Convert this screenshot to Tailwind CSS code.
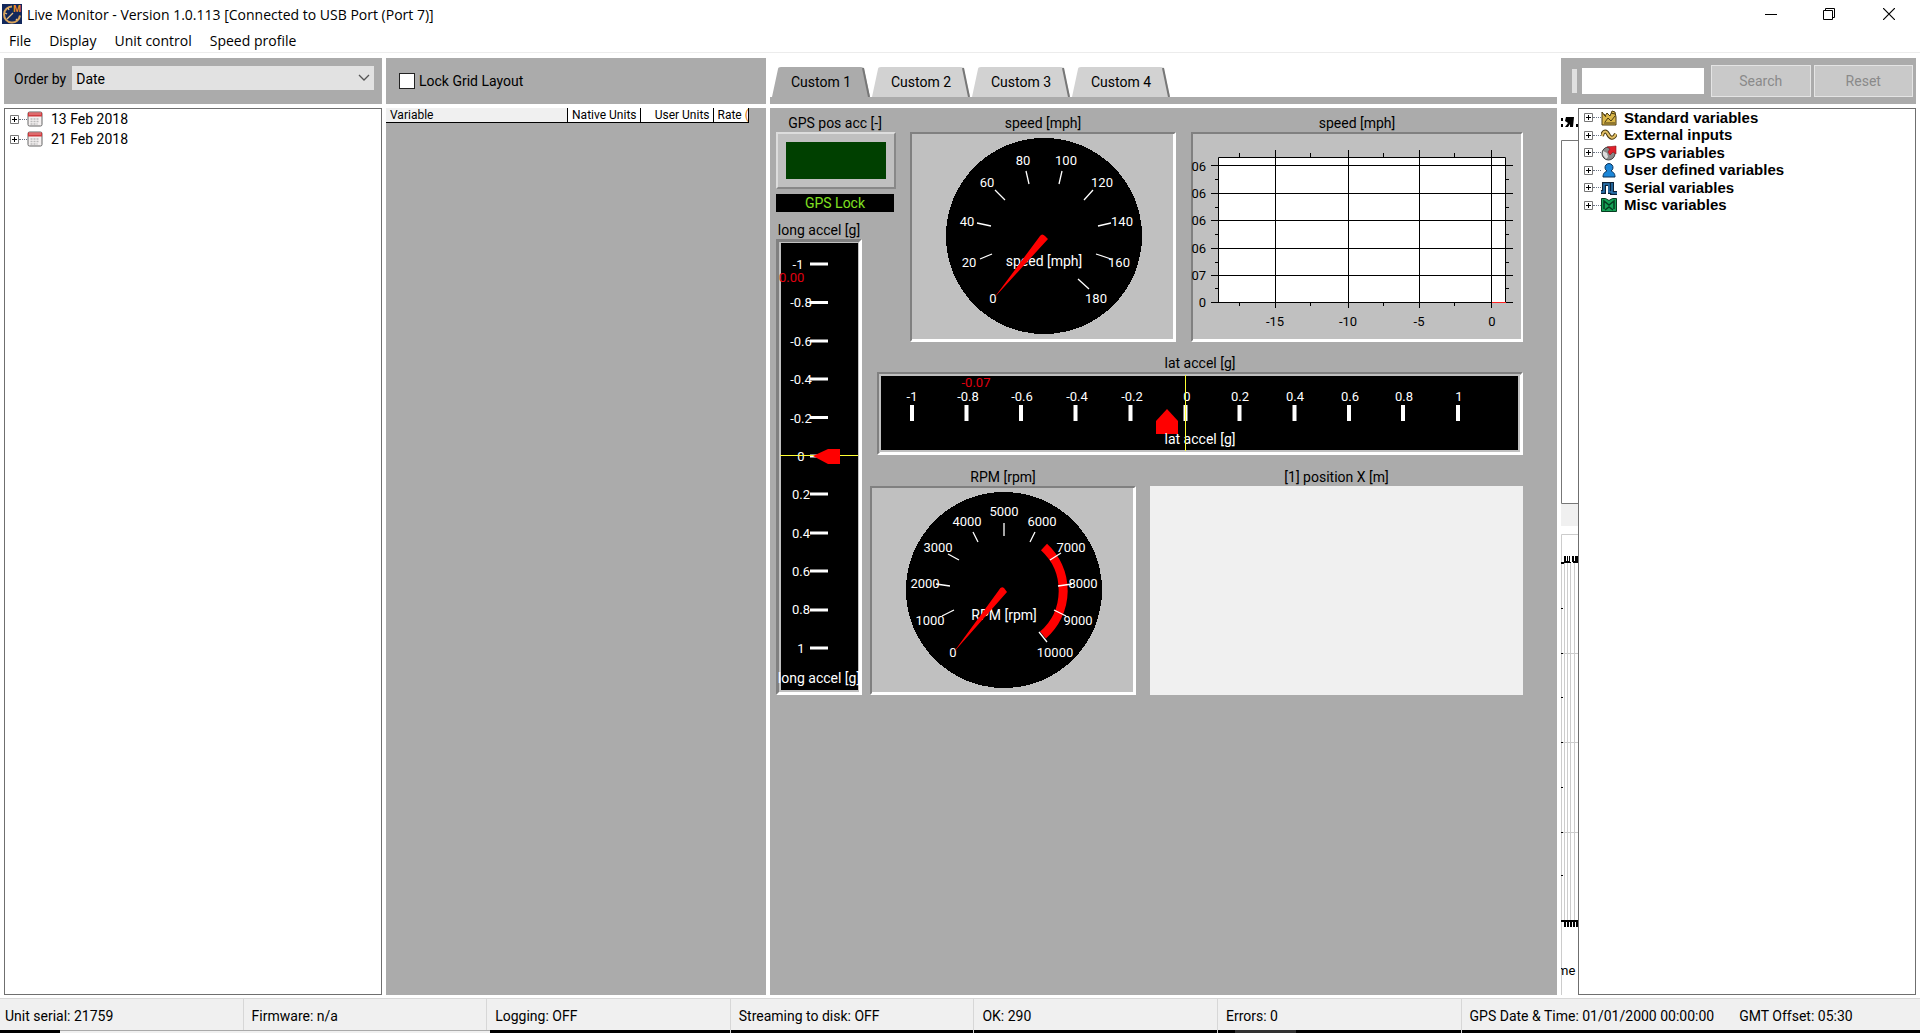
<!DOCTYPE html>
<html lang="en">
<head>
<meta charset="utf-8">
<meta name="viewport" content="width=device-width, initial-scale=1">
<title>Live Monitor</title>
<script src="https://cdn.jsdelivr.net/npm/@tailwindcss/browser@4"></script>
</head>
<body class="flex min-h-screen flex-col bg-white font-[Roboto,Arial,sans-serif] text-[14px] leading-4 text-black">

<!-- Shared symbols -->
<svg class="hidden">
  <symbol id="plus" viewBox="0 0 9 9"><path d="M.5.5h8v8h-8z" fill="#fff" stroke="#777"/><path d="M2 4.500h5M4.500 2v5" stroke="#000"/></symbol>
  <symbol id="calendar" viewBox="0 0 16 16"><rect x="1" y="1" width="14" height="14" rx="1.500" fill="#f4f0f0" stroke="#666"/><path d="M1 1.500h14v4H1z" fill="#cf3b3f"/><path d="M2 3h12" stroke="#ee9a9a"/><path d="M3.500 8h9M3.500 10.500h9M3.500 13h7" stroke="#b9b9b9" stroke-width="1.500" stroke-dasharray="2 1"/></symbol>
</svg>

<header>
  <div class="flex h-7 items-center justify-between">
    <div class="flex items-center gap-[5px] pl-0.5">
      <svg class="size-5" viewBox="0 0 20 20"><path fill="#12285c" d="M0 0h20v20H0z"/><path d="M10 2.500a8 8 0 1 0 8 9" fill="none" stroke="#d9a45b" stroke-width="2"/><path d="m5 15 6-6M3 9l2 1M6 4l1 2M14 15l1 1" stroke="#e8c084" stroke-width="1.300"/><text x="11" y="8" font-size="9" font-weight="bold" fill="#f08a24">M</text></svg>
      <h1 class="pt-px font-['Open_Sans',sans-serif]">Live Monitor - Version 1.0.113 [Connected to USB Port (Port 7)]</h1>
    </div>
    <div class="flex">
      <button aria-label="Minimize" class="flex h-7 w-[58px] items-center justify-center"><svg class="size-3" viewBox="0 0 12 12"><path d="M0 6.500h12" stroke="#000"/></svg></button>
      <button aria-label="Restore" class="flex h-7 w-[58px] items-center justify-center"><svg class="size-3" viewBox="0 0 12 12" fill="none" stroke="#000"><path d="M.5 2.500h9v9h-9zM2.500 2.500v-2h9v9h-2"/></svg></button>
      <button aria-label="Close" class="flex h-7 w-[62px] items-center justify-center"><svg class="size-3" viewBox="0 0 12 12"><path d="m0 0 12 12M12 0 0 12" stroke="#000" stroke-width="1.200"/></svg></button>
    </div>
  </div>
  <nav class="flex h-[25px] items-center gap-[18px] border-b border-[#ececec] pt-0.5 pl-[9px] font-['Open_Sans',sans-serif]">
    <button>File</button><button>Display</button><button>Unit control</button><button>Speed profile</button>
  </nav>
</header>

<main class="flex flex-1 gap-1 px-1 pt-[5px] pb-[3px]">

  <!-- Log files -->
  <section class="flex w-[378px] shrink-0 flex-col gap-1">
    <div class="flex h-[46px] items-start gap-1.5 bg-[#ababab] pt-2 pr-2 pl-2.5">
      <label for="order" class="py-[5px]">Order by</label>
      <div class="relative flex-1">
        <select id="order" class="h-6 w-full appearance-none bg-[#e2e2e2] pt-0.5 pl-1"><option>Date</option></select>
        <svg class="pointer-events-none absolute top-2 right-1 h-2 w-3" viewBox="0 0 12 8"><path d="m1 1 5 5 5-5" fill="none" stroke="#555" stroke-width="1.300"/></svg>
      </div>
    </div>
    <ul class="flex-1 border border-[#6f6f6f] pl-[5px]">
      <li class="flex h-5 items-center"><svg class="size-[9px]"><use href="#plus"/></svg><i class="w-2 border-t border-dotted border-gray-500"></i><svg class="size-4"><use href="#calendar"/></svg><span class="pl-2">13 Feb 2018</span></li>
      <li class="flex h-5 items-center"><svg class="size-[9px]"><use href="#plus"/></svg><i class="w-2 border-t border-dotted border-gray-500"></i><svg class="size-4"><use href="#calendar"/></svg><span class="pl-2">21 Feb 2018</span></li>
    </ul>
  </section>

  <!-- Variable list -->
  <section class="flex w-[380px] shrink-0 flex-col gap-1">
    <div class="flex h-[46px] items-center bg-[#ababab] pl-[13px]">
      <label class="flex items-center gap-1"><input type="checkbox" class="size-4 appearance-none border border-[#222] bg-white">Lock Grid Layout</label>
    </div>
    <div class="flex-1 bg-[#ababab]">
      <table class="w-[363px] table-fixed border-collapse text-[12px] leading-[14px]">
        <thead><tr class="border-b border-black bg-white">
          <th class="w-[181px] border-r border-black bg-[#f0f0f0] pl-1 text-left font-normal">Variable</th>
          <th class="w-[73px] border-r border-black pr-[3px] text-right font-normal">Native Units</th>
          <th class="w-[73px] border-r border-black pr-[3px] text-right font-normal">User Units</th>
          <th class="overflow-hidden border-r border-black pl-1 text-left font-normal whitespace-nowrap">Rate <span class="text-amber-600">(</span></th>
        </tr></thead>
      </table>
    </div>
  </section>

  <!-- Dashboard -->
  <section class="flex min-w-0 flex-1 flex-col gap-1">
    <div class="flex h-[46px] flex-col justify-end">
      <div class="flex gap-0.5 pl-0.5">
        <button class="relative h-[30px] w-[98px]"><svg class="absolute inset-0 size-full" viewBox="0 0 98 30"><path d="M0 30 6 2q0-2 3-2h80q2 0 3 2l6 28z" fill="#ababab"/><path d="m91 1 6 29" stroke="#777" stroke-width="2"/></svg><span class="relative">Custom 1</span></button>
        <button class="relative h-[30px] w-[98px]"><svg class="absolute inset-0 size-full" viewBox="0 0 98 30"><path d="M0 30 6 2q0-2 3-2h80q2 0 3 2l6 28z" fill="#d2d2d2"/><path d="m91 1 6 29" stroke="#777" stroke-width="2"/></svg><span class="relative">Custom 2</span></button>
        <button class="relative h-[30px] w-[98px]"><svg class="absolute inset-0 size-full" viewBox="0 0 98 30"><path d="M0 30 6 2q0-2 3-2h80q2 0 3 2l6 28z" fill="#d2d2d2"/><path d="m91 1 6 29" stroke="#777" stroke-width="2"/></svg><span class="relative">Custom 3</span></button>
        <button class="relative h-[30px] w-[98px]"><svg class="absolute inset-0 size-full" viewBox="0 0 98 30"><path d="M0 30 6 2q0-2 3-2h80q2 0 3 2l6 28z" fill="#d2d2d2"/><path d="m91 1 6 29" stroke="#777" stroke-width="2"/></svg><span class="relative">Custom 4</span></button>
      </div>
      <div class="h-[7px] bg-[#ababab]"></div>
    </div>

    <div class="flex flex-1 gap-2 bg-[#ababab] pt-1 pl-1.5">
      <div class="w-[86px] shrink-0">
        <h2 class="h-5 w-[118px] pt-[3px] text-center">GPS pos acc [-]</h2>
        <div class="h-[57px] w-[120px] border-2 border-t-[#ddd] border-r-[#888] border-b-[#888] border-l-[#ddd] bg-[#c0c0c0] p-2"><div class="h-full bg-[#004000]"></div></div>
        <div class="mt-[5px] h-[18px] w-[118px] bg-black pt-px text-center text-[#80e020]">GPS Lock</div>
        <h2 class="h-[27px] pt-[10px] text-center whitespace-nowrap">long accel [g]</h2>
        <svg class="block h-[456px] w-[86px] text-[13px]" viewBox="0 0 86 456" fill="#fff">
          <path d="M0 0h86v456H0z" fill="#fff"/><path d="M0 0h86l-3 3H3v450l-3 3z" fill="#808080"/><path d="M3 3h80v450H3z" fill="#c0c0c0"/><path d="M5 4h77v447H5z" fill="#000"/>
          <path d="M34 25h18M34 63.500h18M34 102h18M34 140h18M34 178.500h18M34 217h18M34 255h18M34 294h18M34 332h18M34 371h18M34 409h18" stroke="#fff" stroke-width="3"/>
          <g text-anchor="middle"><text x="22" y="30">-1</text><text x="25" y="68">-0.8</text><text x="25" y="107">-0.6</text><text x="25" y="145">-0.4</text><text x="25" y="184">-0.2</text><text x="25" y="222">0</text><text x="25" y="260">0.2</text><text x="25" y="299">0.4</text><text x="25" y="337">0.6</text><text x="25" y="375">0.8</text><text x="25" y="414">1</text><text x="43" y="444" class="text-[14px]">long accel [g]</text></g>
          <text x="3" y="43" fill="#e00010">0.00</text>
          <path d="M4 216.500h78" stroke="#ff3"/><path d="m37 217 15-7h12v15H52z" fill="#f00"/>
        </svg>
      </div>

      <div>
        <div class="flex gap-[15px] pl-10">
          <div>
            <h2 class="h-5 pt-[3px] text-center">speed [mph]</h2>
            <svg class="block h-[210px] w-[266px] text-[13px]" viewBox="910 132 266 210" fill="#fff">
              <path d="M910 132h266v210H910z"/><path d="M910 132h266l-2 2H912v206l-2 2z" fill="#808080"/><path d="M912 134h261v205H912z" fill="#c0c0c0"/>
              <circle cx="1044" cy="236" r="98" fill="#000" shape-rendering="crispEdges"/>
              <g text-anchor="middle"><text x="1044" y="266" class="text-[14px]">speed [mph]</text><text x="1023" y="165">80</text><text x="1066" y="165">100</text><text x="987" y="187">60</text><text x="1102" y="187">120</text><text x="967" y="226">40</text><text x="1122" y="226">140</text><text x="969" y="267">20</text><text x="1119" y="267">160</text><text x="993" y="303">0</text><text x="1096" y="303">180</text></g>
              <path d="m1026 171 3 13M1062 171l-3 13M995 190l10 10M1093 190l-9 10M977 223l14 3M1111 223l-13 3M980 259l12-5M1111 259l-15-5M1078 279l11 10" stroke="#fff" stroke-width="1.300"/>
              <path d="m994 298 46-62q2-3 5 0l3 3z" fill="#f00"/>
            </svg>
          </div>
          <div>
            <h2 class="h-5 pt-[3px] text-center">speed [mph]</h2>
            <svg class="block h-[210px] w-[332px] text-[13px]" viewBox="1191 132 332 210">
              <path d="M1191 132h332v210h-332z" fill="#fff"/><path d="M1191 132h332l-2 2h-328v206l-2 2z" fill="#808080"/><path d="M1193 134h328v205h-328z" fill="#c0c0c0"/>
              <path d="M1218.500 157.500h287v145h-287z" fill="#fff" stroke="#000"/>
              <path d="M1275.500 150v158M1348.500 150v158M1419.500 150v158M1491.500 150v158M1211 165.500h302M1211 193.500h302M1211 220.500h302M1211 248.500h302M1211 275.500h302M1211 302.500h302M1239.500 153v4M1310.500 153v4M1383.500 153v4M1454.500 153v4M1239.500 302v4M1310.500 302v4M1383.500 302v4M1454.500 302v4M1215 179.500h3M1215 207.500h3M1215 234.500h3M1215 262.500h3M1215 288.500h3M1506 179.500h3M1506 207.500h3M1506 234.500h3M1506 262.500h3M1506 288.500h3" stroke="#000"/>
              <path d="M1492 302.500h14" stroke="#f22"/>
              <g text-anchor="end"><text x="1206" y="171">06</text><text x="1206" y="198">06</text><text x="1206" y="225">06</text><text x="1206" y="253">06</text><text x="1206" y="280">07</text><text x="1206" y="307">0</text></g>
              <g text-anchor="middle"><text x="1275" y="326">-15</text><text x="1348" y="326">-10</text><text x="1419" y="326">-5</text><text x="1492" y="326">0</text></g>
            </svg>
          </div>
        </div>

        <div class="pt-2.5 pl-[7px]">
          <h2 class="h-5 pt-[3px] text-center">lat accel [g]</h2>
          <svg class="block h-[83px] w-[646px] text-[13px]" viewBox="877 372 646 83" fill="#fff">
            <path d="M877 372h646v83H877z"/><path d="M877 372h646l-3 3H880v77l-3 3z" fill="#808080"/><path d="M879 374h641v78H879z" fill="#c0c0c0"/><path d="M881 376h637v74H881z" fill="#000"/>
            <path d="M912 405v16M966.500 405v16M1021 405v16M1075.500 405v16M1130.500 405v16M1185.500 405v16M1239.500 405v16M1294.500 405v16M1349 405v16M1403 405v16M1458 405v16" stroke="#fff" stroke-width="4"/>
            <g text-anchor="middle"><text x="912" y="401">-1</text><text x="968" y="401">-0.8</text><text x="1022" y="401">-0.6</text><text x="1077" y="401">-0.4</text><text x="1132" y="401">-0.2</text><text x="1187" y="401">0</text><text x="1240" y="401">0.2</text><text x="1295" y="401">0.4</text><text x="1350" y="401">0.6</text><text x="1404" y="401">0.8</text><text x="1459" y="401">1</text><text x="976" y="387" fill="#e00010">-0.07</text></g>
            <path d="m1167 409 11 12v13h-22v-13z" fill="#f00"/>
            <text x="1200" y="444" text-anchor="middle" class="text-[14px]">lat accel [g]</text>
            <path d="M1185.500 375v76" stroke="#ff3"/>
          </svg>
        </div>

        <div class="flex gap-[14px] pt-[11px]">
          <div>
            <h2 class="h-5 pt-[3px] text-center">RPM [rpm]</h2>
            <svg class="block h-[209px] w-[266px] text-[13px]" viewBox="870 486 266 209" fill="#fff">
              <path d="M870 486h266v209H870z"/><path d="M870 486h266l-2 2H872v205l-2 2z" fill="#808080"/><path d="M872 488h261v204H872z" fill="#c0c0c0"/>
              <circle cx="1004" cy="590" r="98" fill="#000" shape-rendering="crispEdges"/>
              <path d="M1044 547a59 59 0 0 1-1 88" fill="none" stroke="#f00" stroke-width="9"/>
              <g text-anchor="middle"><text x="1004" y="620" class="text-[14px]">RPM [rpm]</text><text x="1004" y="516">5000</text><text x="967" y="526">4000</text><text x="1042" y="526">6000</text><text x="938" y="552">3000</text><text x="1071" y="552">7000</text><text x="925" y="588">2000</text><text x="1083" y="588">8000</text><text x="930" y="625">1000</text><text x="1078" y="625">9000</text><text x="953" y="657">0</text><text x="1055" y="657">10000</text></g>
              <path d="M1004 523v13M973 532l5 10M1035 532l-5 10M948 554l11 6M1061 553l-11 7M936 584l14 2M1072 584l-14 2M942 616l12-6M1066 616l-12-6M1039 632l8 10" stroke="#fff" stroke-width="1.300"/>
              <path d="m953 653 46-63q2-4 5-2l3 4z" fill="#f00"/>
            </svg>
          </div>
          <div class="flex flex-1 flex-col">
            <h2 class="h-5 pt-[3px] text-center">[1] position X [m]</h2>
            <div class="flex-1 bg-[#f0f0f0]"></div>
          </div>
        </div>
      </div>
    </div>
  </section>

  <!-- Variable tree -->
  <section class="flex w-[355px] shrink-0 flex-col gap-1">
    <form class="flex h-[46px] items-center bg-[#ababab] pr-[3px] pl-[11px]">
      <i class="h-6 w-[5px] bg-[#e0e0e0]"></i>
      <input aria-label="Search variables" class="ml-[5px] h-[26px] w-[122px] bg-white px-1">
      <button type="button" disabled class="ml-[7px] h-8 flex-1 border border-[#e4e4e4] bg-[#c9c9c9] text-[#8a8a8a]">Search</button>
      <button type="button" disabled class="ml-[3px] h-8 flex-1 border border-[#e4e4e4] bg-[#c9c9c9] text-[#8a8a8a]">Reset</button>
    </form>
    <div class="flex flex-1">
      <svg class="h-[887px] w-[17px] text-[13px]" viewBox="0 0 17 887" fill="none">
        <path d="M0 10h2v3H0zm0 6h2v3H0zM5 9h8l-1 10h-3v-3l-2 3H4l3-4-3-2zM15 16h2v3h-2z" fill="#000"/>
        <path d="M17 32.500H.5v363H17" stroke="#777"/><path d="M0 396h17v22H0z" fill="#f0f0f0"/>
        <path d="M17 426.500H.5V887M3.500 454v362M6.500 454v362M9.500 454v362M13.500 454v362M0 545.500h17M0 634.500h17M0 724.500h17" stroke="#ccc"/>
        <path d="M0 500.500h2M0 545.500h2M0 589.500h2M0 634.500h2M0 679.500h2M0 724.500h2M0 767.500h2" stroke="#000"/>
        <path d="M0 454h3v-6h2v5h1v-5h1v5h1v-5h1v6h2v-6h2v5h1v-5h3v7h-5v-1h-2v1H3v1H0zM0 812h17v7h-2v-5h-1v5h-2v-5h-1v5H9v-5H8v5H6v-5H5v5H3v-5H0z" fill="#000"/>
        <text x="-4" y="867" fill="#000">me</text>
      </svg>
      <div class="flex-1 border border-[#6f6f6f] pl-[5px]">
        <ul class="grid h-[105px] grid-rows-6 font-['Liberation_Sans',Arial,sans-serif] text-[15px] font-bold">
          <li class="flex items-center"><svg class="size-[9px]"><use href="#plus"/></svg><i class="w-2 border-t border-dotted border-gray-500"></i><svg class="size-4" viewBox="0 0 16 16"><path d="M1 2v13h14V7l-1-5-3-1-2 5-3-3-2 3z" fill="#d9b64a" stroke="#4a3a10"/><path d="m4 12 3-4 3 3 4-5M3 4l2 3M10 3l4 1M3 13h11" stroke="#4a3a10" fill="none"/></svg><span class="pl-[7px]">Standard variables</span></li>
          <li class="flex items-center"><svg class="size-[9px]"><use href="#plus"/></svg><i class="w-2 border-t border-dotted border-gray-500"></i><svg class="size-4" viewBox="0 0 16 16" fill="none"><path d="M1 9c1-5 4-6 6-2s5 6 8 0" stroke="#4a3a10" stroke-width="4"/><path d="M1 9c1-5 4-6 6-2s5 6 8 0" stroke="#e3c067" stroke-width="2"/></svg><span class="pl-[7px]">External inputs</span></li>
          <li class="flex items-center"><svg class="size-[9px]"><use href="#plus"/></svg><i class="w-2 border-t border-dotted border-gray-500"></i><svg class="size-4" viewBox="0 0 16 16"><circle cx="7.500" cy="8.500" r="6.500" fill="#888" stroke="#444"/><path d="m2 6 4 2 1 4-2 2-3-4z" fill="#ddd"/><path d="m6 2 9-1v8l-3-2-3 3-2-3 2-3z" fill="#e0202a" stroke="#80141a" stroke-width=".6"/></svg><span class="pl-[7px]">GPS variables</span></li>
          <li class="flex items-center"><svg class="size-[9px]"><use href="#plus"/></svg><i class="w-2 border-t border-dotted border-gray-500"></i><svg class="size-4" viewBox="0 0 16 16"><path d="M2 15c0-4 2-5 4-6a4 4 0 1 1 4 0c2 1 4 2 4 6z" fill="#1c86d8" stroke="#0b3157"/></svg><span class="pl-[7px]">User defined variables</span></li>
          <li class="flex items-center"><svg class="size-[9px]"><use href="#plus"/></svg><i class="w-2 border-t border-dotted border-gray-500"></i><svg class="size-4" viewBox="0 0 16 16" fill="none"><path d="M0 12h3V4h6v8h1M11 2v11h5" stroke="#0e2236" stroke-width="4"/><path d="M0 12h3V4h5v8h3V3v10h5" stroke="#2d7bb9" stroke-width="1.500"/></svg><span class="pl-[7px]">Serial variables</span></li>
          <li class="flex items-center"><svg class="size-[9px]"><use href="#plus"/></svg><i class="w-2 border-t border-dotted border-gray-500"></i><svg class="size-4" viewBox="0 0 16 16"><path d="M.5 1.500h4l3.500 2 3.500-2h4v13H.5z" fill="#15a055" stroke="#063d20"/><path d="M3 12V4l5 4 5-4v8M4 13l4-3 4 3" fill="none" stroke="#063d20" stroke-width="1.500"/></svg><span class="pl-[7px]">Misc variables</span></li>
        </ul>
      </div>
    </div>
  </section>
</main>

<footer>
  <div class="grid h-8 grid-cols-[repeat(6,127fr)_239fr] items-stretch border-t border-[#d7d7d7] bg-[#f0f0f0] leading-[34px]">
    <div class="border-r border-[#d7d7d7] pl-[5px]">Unit serial: 21759</div>
    <div class="border-r border-[#d7d7d7] pl-2">Firmware: n/a</div>
    <div class="border-r border-[#d7d7d7] pl-2">Logging: OFF</div>
    <div class="border-r border-[#d7d7d7] pl-2">Streaming to disk: OFF</div>
    <div class="border-r border-[#d7d7d7] pl-2">OK: 290</div>
    <div class="border-r border-[#d7d7d7] pl-2">Errors: 0</div>
    <div class="flex gap-[25px] pl-2"><span>GPS Date &amp; Time: 01/01/2000 00:00:00</span><span>GMT Offset: 05:30</span></div>
  </div>
  <div class="flex h-[3px] bg-black">
    <div class="ml-[60px] w-[430px] border-t border-[#aaa] bg-[#f0f0f0]"></div>
    <div class="ml-[745px] w-[61px] bg-[#333]"></div>
  </div>
</footer>
</body>
</html>
